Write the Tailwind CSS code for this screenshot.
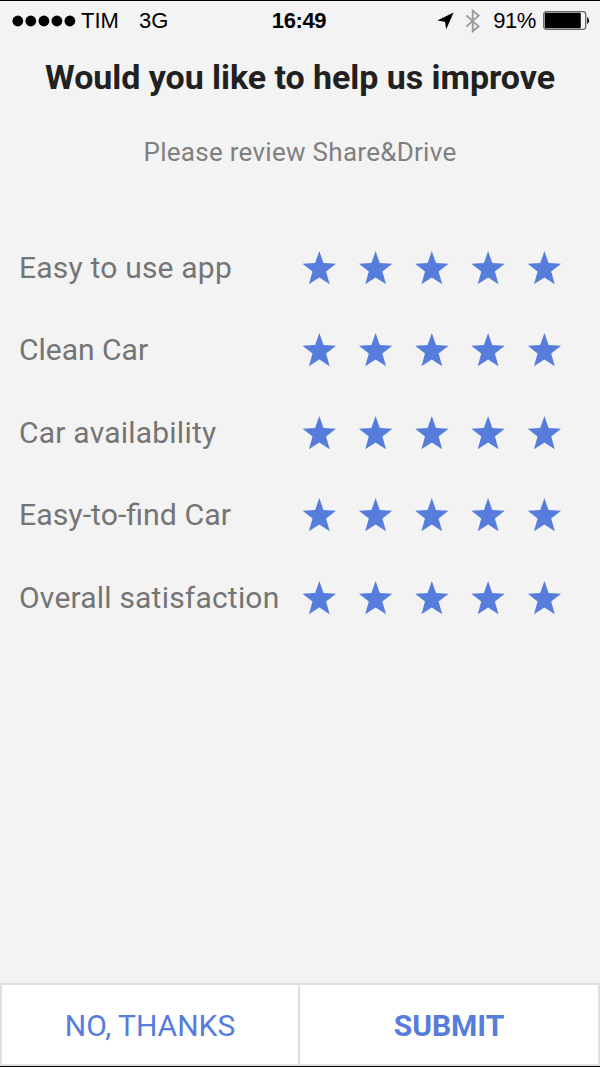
<!DOCTYPE html>
<html lang="en">
<head>
<meta charset="utf-8">
<title>Review</title>
<script src="https://cdn.jsdelivr.net/npm/@tailwindcss/browser@4"></script>
</head>
<body class="bg-[#f3f3f3]">
<svg class="hidden">
  <symbol id="star" viewBox="0 0 33.4 33.4"><path d="M16.7 0L20.9 12L33.4 12.7L23.5 20.4L27.1 33.2L16.7 26.5L6.3 33.2L9.9 20.4L0 12.7L12.5 12Z"/></symbol>
  <symbol id="stars" viewBox="0 0 260 34"><g><use href="#star" x=".6" y=".1" width="33.4" height="33.4"/><use href="#star" x="56.9" y=".1" width="33.4" height="33.4"/><use href="#star" x="113.1" y=".1" width="33.4" height="33.4"/><use href="#star" x="169.4" y=".1" width="33.4" height="33.4"/><use href="#star" x="225.7" y=".1" width="33.4" height="33.4"/></g></symbol>
</svg>
<div class="flex h-[1067px] w-[600px] flex-col overflow-hidden border-y border-black bg-[#f3f3f3] font-['Roboto',sans-serif]">
  <header class="grid h-[39px] grid-cols-[1fr_auto_1fr] items-center font-['Liberation_Sans',sans-serif] text-[22px] leading-none text-black">
    <div class="flex items-center pl-3">
      <svg class="h-3 w-[64px]" viewBox="0 0 64 12"><circle cx="5.8" cy="6" r="5.4"/><circle cx="18.8" cy="6" r="5.4"/><circle cx="31.9" cy="6" r="5.4"/><circle cx="44.9" cy="6" r="5.4"/><circle cx="57.9" cy="6" r="5.4"/></svg>
      <span class="ml-[5px]">TIM</span><span class="ml-[20px]">3G</span>
    </div>
    <span class="pr-[2px] text-[22px] font-bold tracking-[-0.4px]">16:49</span>
    <div class="flex items-center justify-end pr-[10px]">
      <svg class="h-[18px] w-[17px]" viewBox="0 0 17 18"><path d="M16.6 .6L.3 8.6L8 9.8L9.2 17.3Z"/></svg>
      <svg class="ml-[11px] h-6 w-4" viewBox="0 0 16 24" fill="none" stroke="#999" stroke-width="1.8"><path d="M1.3 6.4L13.6 17.4L7.7 22.3V1.7L13.6 6.6L1.3 17.6"/></svg>
      <span class="ml-3 tracking-[-0.4px]">91%</span>
      <svg class="ml-[7px] h-[19px] w-[47px]" viewBox="0 0 47 19"><rect x=".7" y=".7" width="42" height="17.6" rx="2.5" fill="#f3f3f3" stroke="#666" stroke-width="1.3"/><rect x="1.8" y="1.8" width="36" height="15.4" rx="1"/><path d="M44.2 5.7Q48 9.5 44.2 13.3Z"/></svg>
    </div>
  </header>
  <h1 class="mt-[17px] text-center text-[34px] leading-[40px] font-bold tracking-[-0.05px] whitespace-nowrap text-[#212121]">Would you like to help us improve</h1>
  <p class="mt-[39px] text-center text-[26px] leading-8 tracking-[0.28px] text-[#808080]">Please review Share&amp;Drive</p>
  <main class="mt-[58.4px] grid auto-rows-[82.5px] pr-[38px] pl-[19px] text-[30px] text-[#757575]">
    <div class="flex items-center justify-between"><span class="tracking-[0.2px] whitespace-nowrap">Easy to use app</span><svg class="h-[34px] w-[260px] shrink-0 fill-[#567cdc]"><use href="#stars"/></svg></div>
    <div class="flex items-center justify-between"><span class="-mt-px whitespace-nowrap">Clean Car</span><svg class="h-[34px] w-[260px] shrink-0 fill-[#567cdc]"><use href="#stars"/></svg></div>
    <div class="flex items-center justify-between"><span class="tracking-[0.22px] whitespace-nowrap">Car availability</span><svg class="h-[34px] w-[260px] shrink-0 fill-[#567cdc]"><use href="#stars"/></svg></div>
    <div class="flex items-center justify-between"><span class="-mt-px text-[30.3px] whitespace-nowrap">Easy-to-find Car</span><svg class="h-[34px] w-[260px] shrink-0 fill-[#567cdc]"><use href="#stars"/></svg></div>
    <div class="flex items-center justify-between"><span class="tracking-[0.2px] whitespace-nowrap">Overall satisfaction</span><svg class="h-[34px] w-[260px] shrink-0 fill-[#567cdc]"><use href="#stars"/></svg></div>
  </main>
  <footer class="mt-auto grid h-[83px] grid-cols-2 border-2 border-[#dfdfdf] bg-white text-[30px] text-[#567cdc]">
    <button class="border-r-2 border-[#dfdfdf] pt-[2px]">NO, THANKS</button>
    <button class="pt-[2px] font-bold">SUBMIT</button>
  </footer>
</div>
</body>
</html>
